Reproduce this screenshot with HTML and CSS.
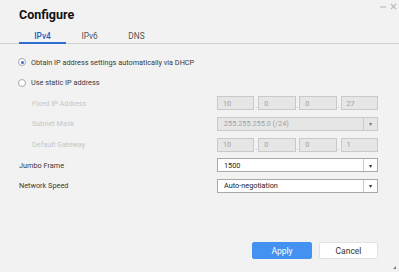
FILE: index.html
```html
<!DOCTYPE html>
<html lang="en">
<head>
    <meta charset="UTF-8">
    <meta name="viewport" content="width=device-width, initial-scale=1.0">
    <title>Configure</title>
    <link rel="stylesheet" href="styles.css">
</head>
<body>
    <div class="dialog">
        <div class="header">
            <h1>Configure</h1>
            <div class="win-controls">
                <svg width="7" height="7" viewBox="0 0 7 7"><path d="M0 4h6" stroke="#bdbdbd" stroke-width="1.2"/></svg>
                <svg width="7" height="7" viewBox="0 0 7 7"><path d="M1 1l5 5M6 1l-5 5" stroke="#bdbdbd" stroke-width="1.2"/></svg>
            </div>
        </div>

        <div class="tabs">
            <div class="tab active">IPv4</div>
            <div class="tab">IPv6</div>
            <div class="tab">DNS</div>
        </div>

        <div class="content">
            <div class="row">
                <label class="radio checked"><span class="dot"></span>Obtain IP address settings automatically via DHCP</label>
            </div>
            <div class="row">
                <label class="radio"><span class="dot"></span>Use static IP address</label>
            </div>
            <div class="row">
                <span class="label sub disabled">Fixed IP Address</span>
                <div class="field ip">
                    <span class="box">10</span><span class="sep">.</span>
                    <span class="box">0</span><span class="sep">.</span>
                    <span class="box">0</span><span class="sep">.</span>
                    <span class="box">27</span>
                </div>
            </div>
            <div class="row">
                <span class="label sub disabled">Subnet Mask</span>
                <div class="field select disabled">
                    <span class="value">255.255.255.0 (/24)</span>
                    <span class="arrow">&#9662;</span>
                </div>
            </div>
            <div class="row">
                <span class="label sub disabled">Default Gateway</span>
                <div class="field ip">
                    <span class="box">10</span><span class="sep">.</span>
                    <span class="box">0</span><span class="sep">.</span>
                    <span class="box">0</span><span class="sep">.</span>
                    <span class="box">1</span>
                </div>
            </div>
            <div class="row">
                <span class="label">Jumbo Frame</span>
                <div class="field select">
                    <span class="value">1500</span>
                    <span class="arrow">&#9662;</span>
                </div>
            </div>
            <div class="row">
                <span class="label">Network Speed</span>
                <div class="field select">
                    <span class="value">Auto-negotiation</span>
                    <span class="arrow">&#9662;</span>
                </div>
            </div>
        </div>

        <div class="footer">
            <button class="btn primary">Apply</button>
            <button class="btn">Cancel</button>
        </div>
        <span class="grip"></span>
    </div>
</body>
</html>
```

FILE: styles.css
```css
body {
    margin: 0;
    background: #f2f2f2;
    font-family: Roboto, "Liberation Sans", sans-serif;
    font-size: 7.3px;
    color: #3a3a3a;
}
.dialog {
    position: relative;
    height: 272px;
    display: flex;
    flex-direction: column;
}
.header {
    display: flex;
    justify-content: space-between;
    padding: 6px 2px 0 19px;
}
.header h1 {
    margin: 0;
    font-size: 12.5px;
    line-height: 18px;
    font-weight: 700;
    color: #111;
}
.win-controls {
    display: flex;
    gap: 3px;
    align-items: center;
    height: 8px;
    margin-top: -4px;
}
.tabs {
    display: flex;
    padding-left: 19px;
    border-bottom: 1px solid #d2d2d2;
}
.tab {
    width: 47px;
    text-align: center;
    font-size: 8.3px;
    line-height: 12px;
    padding-top: 6px;
    margin-bottom: -1px;
    border-bottom: 2px solid transparent;
    color: #555;
}
.tab.active {
    color: #2262c4;
    font-weight: 500;
    border-bottom-color: #2f6fd4;
}
.content {
    padding: 7.7px 21px 0 19px;
}
.row {
    height: 20.67px;
    display: flex;
    align-items: center;
    justify-content: space-between;
}
.radio {
    display: flex;
    align-items: center;
    gap: 5px;
    margin-left: -1px;
}
.dot {
    width: 6px;
    height: 6px;
    border: 1px solid #a8a8a8;
    border-radius: 50%;
    background: #fff;
    position: relative;
}
.radio.checked .dot::after {
    content: "";
    position: absolute;
    left: 1.5px;
    top: 1.5px;
    width: 3px;
    height: 3px;
    border-radius: 50%;
    background: #2f6fd4;
}
.label.sub {
    margin-left: 13px;
}
.disabled {
    color: #c6c6c6;
}
.field {
    width: 161px;
    height: 14px;
    box-sizing: border-box;
    display: flex;
}
.ip {
    align-items: stretch;
}
.box {
    flex: 1;
    background: #e6e6e6;
    border: 1px solid #c9c9c9;
    padding-left: 5px;
    display: flex;
    align-items: center;
    color: #a2a2a2;
}
.sep {
    width: 3.7px;
    color: #9a9a9a;
    font-size: 8px;
    line-height: 8px;
    display: flex;
    align-items: flex-end;
    justify-content: center;
}
.select {
    background: #fff;
    border: 1px solid #a9a9a9;
    align-items: stretch;
    color: #222;
}
.select.disabled {
    background: #e6e6e6;
    border-color: #c9c9c9;
    color: #a2a2a2;
}
.value {
    flex: 1;
    padding-left: 6px;
    display: flex;
    align-items: center;
}
.arrow {
    width: 13px;
    border-left: 1px solid #c9c9c9;
    display: flex;
    align-items: center;
    justify-content: center;
    font-size: 6px;
    color: #333;
}
.select.disabled .arrow {
    color: #777;
}
.footer {
    margin-top: auto;
    display: flex;
    justify-content: flex-end;
    gap: 7px;
    padding: 0 21px 13px 0;
}
.btn {
    height: 17px;
    width: 59px;
    border: 1px solid #e2e2e2;
    background: #fff;
    color: #333;
    font-family: Roboto, "Liberation Sans", sans-serif;
    font-size: 8.5px;
    border-radius: 2px;
    padding: 0;
}
.btn.primary {
    width: 60px;
    background: #4391f0;
    border-color: #4391f0;
    color: #fff;
}
.grip {
    position: absolute;
    right: 3px;
    bottom: 3px;
    width: 0;
    height: 0;
    border-left: 3px solid transparent;
    border-bottom: 3px solid #777;
}
```
